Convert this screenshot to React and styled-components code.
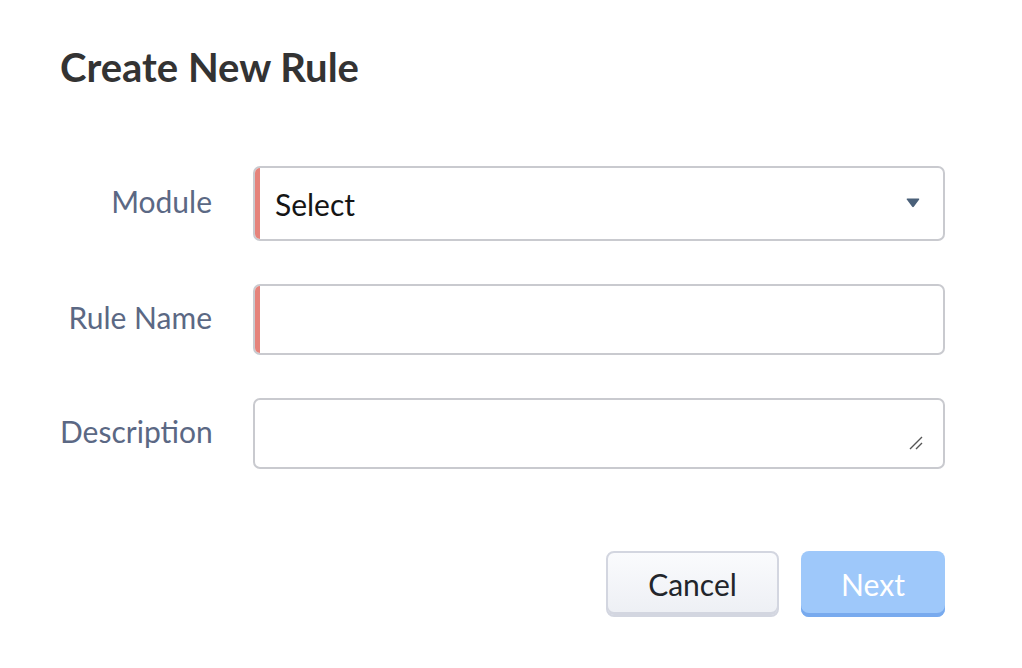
import React from 'react';
import styled, { createGlobalStyle } from 'styled-components';

const GlobalStyle = createGlobalStyle`
  html, body {
    margin: 0;
    background: #ffffff;
    font-family: Lato, "Liberation Sans", sans-serif;
  }
`;

const Page = styled.div`
  width: 1022px;
  height: 668px;
  box-sizing: border-box;
  padding: 43px 77px 0 60px;
`;

const Title = styled.h1`
  margin: 0;
  font-size: 40px;
  font-weight: 700;
  color: #333333;
  line-height: 48px;
`;

const Form = styled.div`
  display: grid;
  grid-template-columns: 152px 1fr;
  column-gap: 41px;
  row-gap: 43px;
  align-items: center;
  margin-top: 75px;
`;

const Label = styled.label`
  text-align: right;
  font-size: 30px;
  color: #5b6884;
  margin-bottom: 5px;
`;

const Field = styled.div`
  position: relative;
  box-sizing: border-box;
  height: ${(p) => p.h}px;
  border: 2px solid #c9cacf;
  border-radius: 7px;
  display: flex;
  align-items: center;
  padding: 0 20px;
  overflow: hidden;
  ${(p) => p.required && `
    &::before {
      content: '';
      position: absolute;
      left: 0;
      top: 0;
      bottom: 0;
      width: 5px;
      background: #e5837b;
    }
  `}
`;

const Value = styled.span`
  flex: 1;
  font-size: 30px;
  color: #151515;
`;

const Caret = styled.svg`
  width: 14px;
  height: 10px;
  margin-right: 3px;
  margin-bottom: 2px;
`;

const Grip = styled.svg`
  position: absolute;
  right: 20px;
  bottom: 17px;
  width: 14px;
  height: 14px;
`;

const Actions = styled.div`
  display: flex;
  justify-content: flex-end;
  gap: 22px;
  margin-top: 82px;
`;

const Button = styled.button`
  box-sizing: border-box;
  height: 66px;
  width: ${(p) => p.w}px;
  border-radius: 8px;
  font-family: inherit;
  font-size: 30px;
  cursor: pointer;
  ${(p) =>
    p.primary
      ? `
    border: none;
    background: #9ec8fa;
    color: #ffffff;
    box-shadow: inset 0 -4px 0 #78aaee;
  `
      : `
    border: 2px solid #d3d6e0;
    background: linear-gradient(#fafbfd, #edeff4);
    color: #22252b;
    box-shadow: inset 0 -3px 0 #d3d6e0;
  `}
`;

export default function App() {
  return (
    <>
      <GlobalStyle />
      <Page>
        <Title>Create New Rule</Title>
        <Form>
          <Label>Module</Label>
          <Field h={75} required>
            <Value>Select</Value>
            <Caret viewBox="0 0 14 10">
              <path d="M0.6 1.4 Q0.4 0.5 1.4 0.5 H12.6 Q13.6 0.5 13.2 1.4 L7.8 8.8 Q7 9.6 6.2 8.8 L0.8 1.4 Z" fill="#4a6079" />
            </Caret>
          </Field>
          <Label>Rule Name</Label>
          <Field h={71} required />
          <Label>Description</Label>
          <Field h={71}>
            <Grip viewBox="0 0 14 14">
              <path d="M1 13 L13 1 M7 13 L13 7" stroke="#555" strokeWidth="1.4" />
            </Grip>
          </Field>
        </Form>
        <Actions>
          <Button w={173}>Cancel</Button>
          <Button w={144} primary>Next</Button>
        </Actions>
      </Page>
    </>
  );
}
